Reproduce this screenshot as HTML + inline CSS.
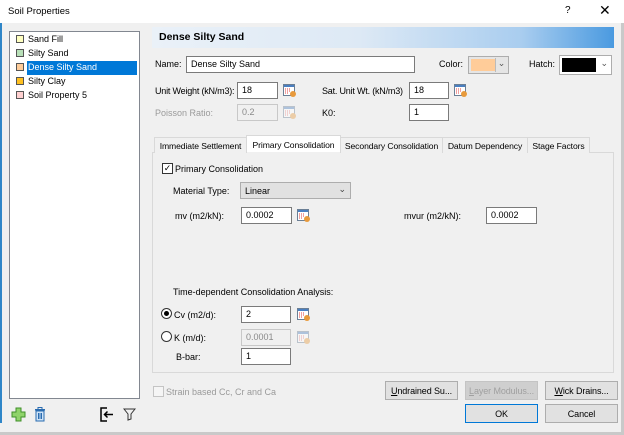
<!DOCTYPE html>
<html><head><meta charset="utf-8"><style>
*{box-sizing:border-box}
body{margin:0;width:624px;height:435px;background:#f0f0f0;font-family:"Liberation Sans",sans-serif;font-size:9px;color:#000;position:relative;overflow:hidden}
.a{position:absolute;white-space:nowrap}
.in{position:absolute;background:#fff;border:1px solid #7a7a7a;height:17px;padding:2px 4px;font-size:9px;white-space:nowrap}
.dis{background:#f0f0f0;border-color:#c8c8c8;color:#8a8a8a}
.gr{color:#9a9a9a}
.ic{position:absolute;width:13px;height:13px}
.tab{position:absolute;top:137px;height:16px;border:1px solid #d9d9d9;border-bottom:none;background:#f0f0f0;padding:3px 0 0;font-size:8.6px;white-space:nowrap;text-align:center;letter-spacing:-0.1px}
.btn{position:absolute;height:19px;border:1px solid #adadad;background:#e1e1e1;text-align:center;padding-top:4px;font-size:9px;white-space:nowrap;letter-spacing:-0.1px}
.sw{display:inline-block;width:8px;height:8px;border:1px solid #555;margin-right:4px;vertical-align:-1px}
.li{position:absolute;left:13px;height:14px;padding:1px 0 0 3px;white-space:nowrap}
</style></head><body>
<div class="a" style="left:0;top:0;width:624px;height:23px;background:#fff"></div>
<div class="a" style="left:8px;top:6px;font-size:9.5px">Soil Properties</div>
<div class="a" style="left:565px;top:5px;font-size:10px">?</div>
<div class="a" style="left:599px;top:2px;font-size:14px">✕</div>
<div class="a" style="left:621px;top:23px;width:3px;height:412px;background:#c9c9c9"></div>
<div class="a" style="left:0;top:432px;width:624px;height:3px;background:#c9c9c9"></div>
<div class="a" style="left:0;top:23px;width:2px;height:400px;background:#2f86c8"></div>

<div class="a" style="left:9px;top:31px;width:131px;height:368px;background:#fff;border:1px solid #828790"></div>
<div class="a" style="left:27px;top:61px;width:110px;height:14px;background:#0078d7"></div>
<div class="li" style="top:33px"><span class="sw" style="background:#ffffc0"></span>Sand Fill</div>
<div class="li" style="top:47px"><span class="sw" style="background:#b8e0b8"></span>Silty Sand</div>
<div class="li" style="top:61px"><span class="sw" style="background:#ffcc99"></span><span style="color:#fff">Dense Silty Sand</span></div>
<div class="li" style="top:75px"><span class="sw" style="background:#ffc020"></span>Silty Clay</div>
<div class="li" style="top:89px"><span class="sw" style="background:#ffd0d0"></span>Soil Property 5</div>

<div class="a" style="left:152px;top:27px;width:462px;height:21px;background:linear-gradient(90deg,#eaf1f8 0%,#dde9f5 45%,#a9cdef 80%,#4a9ae0 100%)"></div>
<div class="a" style="left:159px;top:31px;font-weight:bold;font-size:10.5px">Dense Silty Sand</div>

<div class="a" style="left:155px;top:59px">Name:</div>
<div class="in" style="left:186px;top:56px;width:229px">Dense Silty Sand</div>
<div class="a" style="left:439px;top:59px">Color:</div>
<div class="a" style="left:468px;top:56px;width:41px;height:18px;border:1px solid #adadad;background:#e5e5e5"><div style="position:absolute;left:2px;top:2px;width:24px;height:12px;background:#ffcc99"></div><div style="position:absolute;right:1px;top:1px;width:12px;height:14px;border-left:1px solid #bbb;font-size:9px;text-align:center;color:#555">⌄</div></div>
<div class="a" style="left:529px;top:59px">Hatch:</div>
<div class="a" style="left:559px;top:55px;width:53px;height:20px;border:1px solid #adadad;background:#fff"><div style="position:absolute;left:2px;top:2px;width:34px;height:14px;background:#000"></div><div style="position:absolute;right:3px;top:2px;font-size:9px;color:#555">⌄</div></div>

<svg width="0" height="0" style="position:absolute"><defs><g id="ic"><rect x="0.5" y="0.5" width="11" height="11" fill="#fff" stroke="#6b7f95"/><rect x="1" y="1" width="10" height="2" fill="#4a7fc0"/><path d="M2 5h6M2 7h5M2 9h4" stroke="#e04040" stroke-dasharray="1 1"/><circle cx="10" cy="10" r="3" fill="#e89a3c"/></g></defs></svg>

<div class="a" style="left:155px;top:86px;letter-spacing:-0.2px">Unit Weight (kN/m3):</div>
<div class="in" style="left:237px;top:82px;width:41px">18</div>
<svg class="ic" style="left:283px;top:84px"><use href="#ic"/></svg>
<div class="a" style="left:322px;top:86px;letter-spacing:-0.2px">Sat. Unit Wt. (kN/m3)</div>
<div class="in" style="left:409px;top:82px;width:40px">18</div>
<svg class="ic" style="left:454px;top:84px"><use href="#ic"/></svg>

<div class="a gr" style="left:155px;top:108px">Poisson Ratio:</div>
<div class="in dis" style="left:237px;top:104px;width:41px">0.2</div>
<svg class="ic" style="left:283px;top:106px;opacity:.4"><use href="#ic"/></svg>
<div class="a" style="left:322px;top:108px">K0:</div>
<div class="in" style="left:409px;top:104px;width:40px">1</div>

<div class="a" style="left:152px;top:152px;width:462px;height:221px;border:1px solid #d9d9d9;background:#f0f0f0"></div>
<div class="tab" style="left:154px;width:93px">Immediate Settlement</div>
<div class="tab" style="left:340px;width:103px">Secondary Consolidation</div>
<div class="tab" style="left:442px;width:86px">Datum Dependency</div>
<div class="tab" style="left:527px;width:63px">Stage Factors</div>
<div class="tab" style="left:246px;top:135px;height:18px;width:95px;background:#fff;border-color:#d9d9d9;z-index:2;padding-top:4px">Primary Consolidation</div>
<div class="a" style="left:247px;top:152px;width:93px;height:2px;background:#f0f0f0;z-index:3"></div>

<div class="a" style="left:162px;top:163px;width:11px;height:11px;border:1px solid #333;background:#fff;font-size:9px;line-height:9px;text-align:center">✓</div>
<div class="a" style="left:175px;top:164px">Primary Consolidation</div>
<div class="a" style="left:173px;top:186px">Material Type:</div>
<div class="a" style="left:240px;top:182px;width:111px;height:17px;border:1px solid #adadad;background:#e1e1e1;padding:3px 4px">Linear<span style="position:absolute;right:4px;top:1px;color:#444">⌄</span></div>
<div class="a" style="left:175px;top:211px">mv (m2/kN):</div>
<div class="in" style="left:241px;top:207px;width:51px">0.0002</div>
<svg class="ic" style="left:297px;top:209px"><use href="#ic"/></svg>
<div class="a" style="left:404px;top:211px">mvur (m2/kN):</div>
<div class="in" style="left:486px;top:207px;width:51px">0.0002</div>

<div class="a" style="left:173px;top:287px">Time-dependent Consolidation Analysis:</div>
<div class="a" style="left:161px;top:308px;width:11px;height:11px;border:1px solid #333;border-radius:50%;background:#fff"><div style="position:absolute;left:2px;top:2px;width:5px;height:5px;border-radius:50%;background:#000"></div></div>
<div class="a" style="left:174px;top:310px">Cv (m2/d):</div>
<div class="in" style="left:241px;top:306px;width:50px">2</div>
<svg class="ic" style="left:297px;top:308px"><use href="#ic"/></svg>
<div class="a" style="left:161px;top:331px;width:11px;height:11px;border:1px solid #333;border-radius:50%;background:#fff"></div>
<div class="a" style="left:174px;top:333px">K (m/d):</div>
<div class="in dis" style="left:241px;top:329px;width:50px">0.0001</div>
<svg class="ic" style="left:297px;top:331px;opacity:.4"><use href="#ic"/></svg>
<div class="a" style="left:176px;top:352px">B-bar:</div>
<div class="in" style="left:241px;top:348px;width:50px">1</div>

<div class="a" style="left:153px;top:386px;width:11px;height:11px;border:1px solid #c4c4c4;background:#f5f5f5"></div>
<div class="a gr" style="left:166px;top:387px">Strain based Cc, Cr and Ca</div>
<div class="btn" style="left:385px;top:381px;width:73px"><u>U</u>ndrained Su...</div>
<div class="btn" style="left:465px;top:381px;width:73px;color:#a0a0a0;background:#cfcfcf;border-color:#c4c4c4"><u>L</u>ayer Modulus...</div>
<div class="btn" style="left:545px;top:381px;width:73px"><u>W</u>ick Drains...</div>
<div class="btn" style="left:465px;top:404px;width:73px;border:1px solid #0078d7">OK</div>
<div class="btn" style="left:545px;top:404px;width:73px">Cancel</div>

<svg class="a" style="left:11px;top:407px" width="15" height="15"><path d="M5 1h5v4h4v5h-4v4H5v-4H1V5h4z" fill="#8fd36a" stroke="#3f8f2a"/></svg>
<svg class="a" style="left:34px;top:407px" width="12" height="15"><rect x="1" y="2" width="10" height="1.5" fill="#2a6cb0"/><rect x="4" y="0.5" width="4" height="2" fill="none" stroke="#2a6cb0"/><rect x="2" y="4" width="8" height="10" fill="#cfe3f7" stroke="#2a6cb0"/><path d="M4.5 6v6M6 6v6M7.5 6v6" stroke="#2a6cb0"/></svg>
<svg class="a" style="left:100px;top:407px" width="14" height="15"><path d="M7 1H1v13h6" fill="none" stroke="#000" stroke-width="1.5"/><path d="M13 7.5H5M7.5 4.5l-3 3 3 3" fill="none" stroke="#000" stroke-width="1.5"/></svg>
<svg class="a" style="left:123px;top:408px" width="13" height="13"><path d="M1 1h11L8 6v5L5 12V6z" fill="none" stroke="#333"/></svg>
</body></html>
